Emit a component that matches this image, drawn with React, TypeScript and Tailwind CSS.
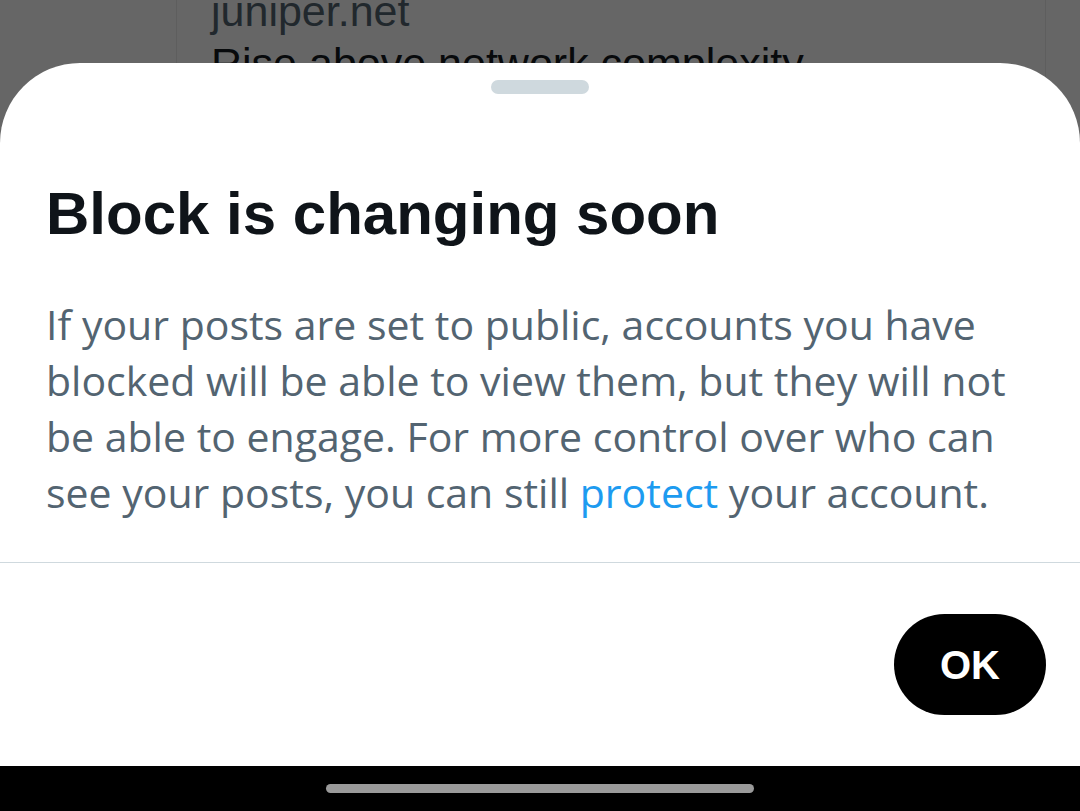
const font = { fontFamily: '"Liberation Sans", Arial, sans-serif' };
const bodyFont = { fontFamily: '"Open Sans", "Liberation Sans", Arial, sans-serif' };

const Backdrop = () => (
  <div className="h-[63px] shrink-0">
    <div className="ml-[176px] w-[870px] h-[200px] -mt-[13px] border-x border-[#5e5e5e] pl-[34px]">
      <div className="text-[43px] leading-[48px] text-[#21282d]">juniper.net</div>
      <div className="text-[43px] leading-[57px] text-[#080a0c]">Rise above network complexity</div>
    </div>
  </div>
);

export default function App() {
  return (
    <div
      className="w-[1080px] h-[811px] bg-[#666666] overflow-hidden flex flex-col"
      style={font}
    >
      <Backdrop />
      <div className="relative z-10 flex-1 bg-white rounded-t-[80px] flex flex-col">
        <div className="mt-[17px] mx-auto w-[98px] h-[14px] rounded-full bg-[#cfd9de]" />

        <h1 className="mt-[84px] pl-[46px] text-[60px] leading-[72px] font-bold text-[#0f1419]">
          Block is changing soon
        </h1>

        <p
          className="mt-[46px] pl-[46px] pr-[4px] text-[41px] leading-[56px] text-[#536471]"
          style={bodyFont}
        >
          If your posts are set to public, accounts you have
          <br />
          blocked will be able to view them, but they will not
          <br />
          be able to engage. For more control over who can
          <br />
          see your posts, you can still{" "}
          <span className="text-[#1d9bf0]">protect</span> your account.
        </p>

        <div className="mt-[42px] h-px bg-[#cfd9de]" />

        <div className="flex justify-end pr-[34px] pt-[51px]">
          <button className="w-[152px] h-[101px] rounded-full bg-black text-white text-[40px] font-bold">
            OK
          </button>
        </div>

        <div className="flex-1" />

        <div className="h-[45px] bg-black flex items-center justify-center">
          <div className="w-[428px] h-[9px] rounded-full bg-[#9a9a9a]" />
        </div>
      </div>
    </div>
  );
}
